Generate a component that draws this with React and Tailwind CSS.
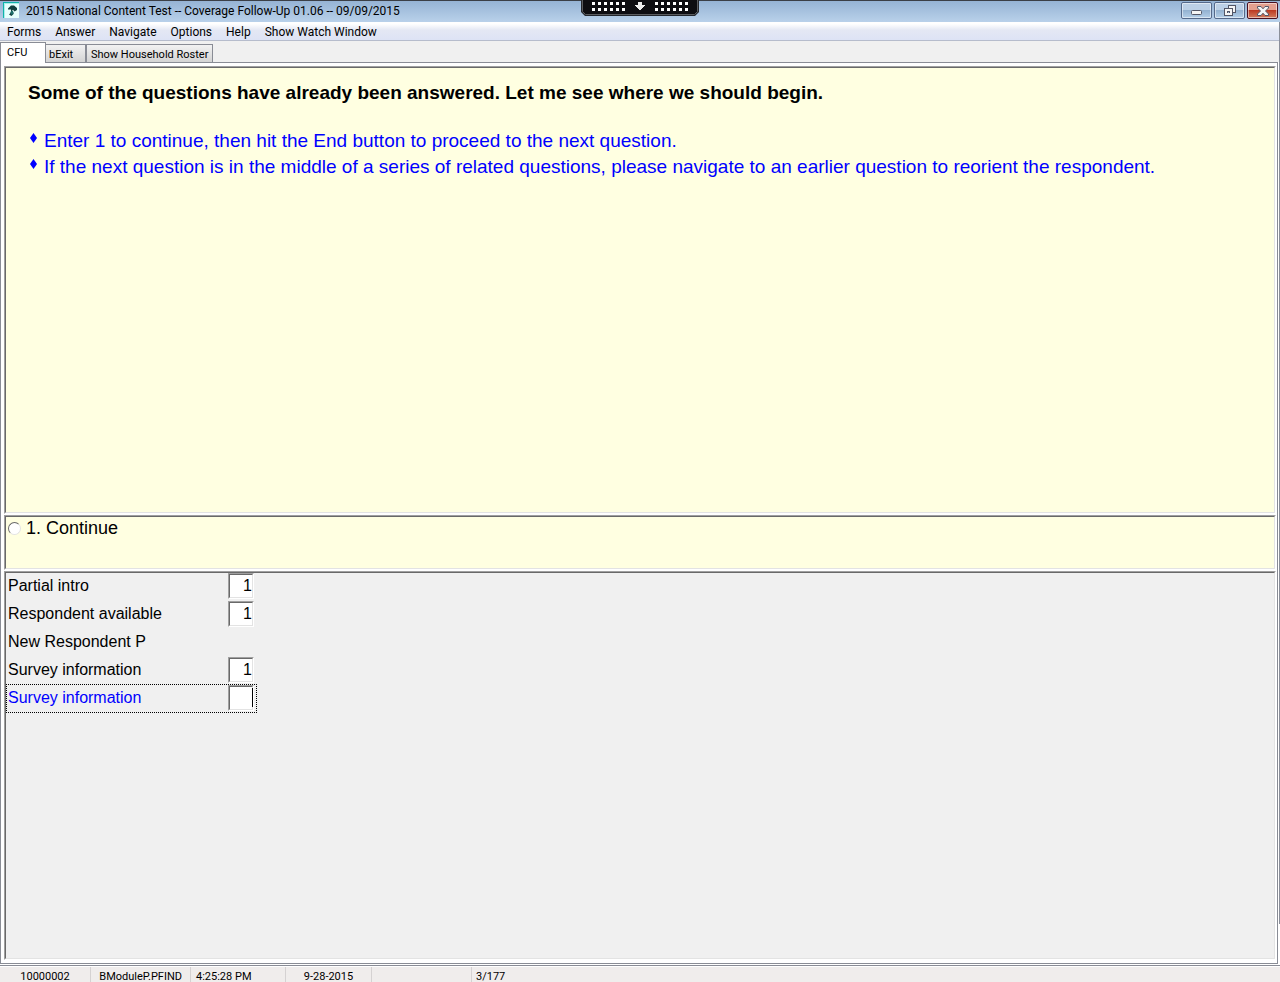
import React from "react";

const menus = ["Forms", "Answer", "Navigate", "Options", "Help", "Show Watch Window"];

const fields = [
  { id: "partial", label: "Partial intro", value: "1" },
  { id: "available", label: "Respondent available", value: "1" },
  { id: "newresp", label: "New Respondent P", value: null },
  { id: "survey1", label: "Survey information", value: "1" },
  { id: "survey2", label: "Survey information", value: "", active: true },
];

const instructions = [
  "Enter 1 to continue, then hit the End button to proceed to the next question.",
  "If the next question is in the middle of a series of related questions, please navigate to an earlier question to reorient the respondent.",
];

const sunken = "border border-t-[#a0a0a0] border-l-[#a0a0a0] border-r-white border-b-white";
const sunkenInner = "border border-t-[#696969] border-l-[#696969] border-r-[#e3e3e3] border-b-[#e3e3e3]";

function Panel({ className, bg, children }) {
  return (
    <section className={`flex flex-col ${sunken} ${className}`}>
      <div className={`grow ${sunkenInner} ${bg}`}>{children}</div>
    </section>
  );
}

function AppIcon() {
  return (
    <svg width="16" height="16" viewBox="0 0 16 16" aria-hidden="true">
      <rect width="16" height="16" fill="#0fb3ab" />
      <rect x="1" y="1" width="15" height="15" fill="#a9efeb" />
      <rect x="2" y="2" width="14" height="14" fill="#e6fffd" />
      <path d="M5 6.500L8 3.500H11L14 6V8L11.500 9.500L10 7.800L9 9L10.500 10.500V12L8.500 14L6 12.500L7 11.500L8 9.500V7.500H5Z" fill="#12403f" />
      <path d="M8 9H10L10.500 11.500L9 13L7.500 11.500Z" fill="#1b6f6b" />
    </svg>
  );
}

function GripDots({ x }) {
  const cols = [0, 6, 12, 18, 24, 30];
  return cols.map((c) => (
    <g key={c} fill="#fff">
      <rect x={x + c} y="2" width="3" height="3" />
      <rect x={x + c} y="8" width="3" height="3" />
    </g>
  ));
}

function SessionBar() {
  return (
    <button type="button" aria-label="Session bar" className="absolute left-1/2 top-0 -translate-x-1/2">
      <svg width="118" height="16" viewBox="0 0 118 16" aria-hidden="true">
        <path d="M0 0H118V12L114 16H4L0 12Z" fill="#24272d" />
        <path d="M1.500 0V11.500L4.500 14.500H113.500L116.500 11.500V0" fill="#0d0d11" stroke="#5b5d60" />
        <g shapeRendering="crispEdges"><GripDots x={11} /><GripDots x={74} /></g>
        <path d="M57 2h4v3h3v1h-1v1h-1v1h-1v1h-1v1h-2v-1h-1v-1h-1v-1h-1v-1h-1v-1h3z" fill="#ececec" shapeRendering="crispEdges" />
      </svg>
    </button>
  );
}

function WindowButton({ label, close, children }) {
  const tone = close
    ? "border-[#4a1020] bg-linear-to-b from-[#e3a08f] from-45% via-[#bc3a22] via-50% to-[#d27a5c]"
    : "border-[#55698a] bg-linear-to-b from-[#bcd0e6] from-45% via-[#94b2d1] via-50% to-[#b4cfe8]";
  return (
    <button type="button" aria-label={label} className={`h-[17px] w-[31px] rounded-[2px] border ${tone}`}>
      <span className="flex h-full items-center justify-center rounded-[1px] border border-white/50">{children}</span>
    </button>
  );
}

export default function App() {
  return (
    <div className="relative flex min-h-screen flex-col bg-white font-['Liberation_Sans',Arial,sans-serif] text-black">
      <header className="relative flex h-[22px] items-start justify-between bg-linear-to-b from-[#94b2d3] to-[#b9d1ea] pl-[3px] pr-[2px] pt-[2px] shadow-[inset_0_1px_0_#3b3f46]">
        <div className="flex items-start gap-[7px]">
          <AppIcon />
          <h1 className="whitespace-nowrap font-[Roboto,'Open_Sans',sans-serif] text-[12px] leading-[18px]">
            2015 National Content Test -- Coverage Follow-Up 01.06 -- 09/09/2015
          </h1>
        </div>
        <SessionBar />
        <div className="flex gap-[2px]">
          <WindowButton label="Minimize">
            <svg width="11" height="5" viewBox="0 0 11 5" className="mt-1" aria-hidden="true">
              <rect x="0.500" y="0.500" width="10" height="4" rx="1" fill="#f5f5f5" stroke="#535666" />
            </svg>
          </WindowButton>
          <WindowButton label="Restore">
            <svg width="12" height="11" viewBox="0 0 12 11" shapeRendering="crispEdges" aria-hidden="true">
              <path d="M4 0h8v8H4z" fill="#535666" />
              <path d="M5 1h6v6H5z" fill="#f5f5f5" />
              <path d="M7 3h2v2H7z" fill="#535666" />
              <path d="M0 3h9v8H0z" fill="#535666" />
              <path d="M1 4h7v6H1z" fill="#f5f5f5" />
              <path d="M3 6h3v2H3z" fill="#535666" />
              <path d="M4 7h1v1H4z" fill="#9db9d6" />
            </svg>
          </WindowButton>
          <WindowButton label="Close" close>
            <svg width="12" height="10" viewBox="0 0 12 10" aria-hidden="true">
              <path d="M0.500 0.500H4L6 2.800L8 0.500H11.500V2L8.500 5L11.500 8V9.500H8L6 7.200L4 9.500H0.500V8L3.500 5L0.500 2Z" fill="#f5f5f5" stroke="#535666" />
            </svg>
          </WindowButton>
        </div>
      </header>

      <nav className="flex h-[19px] gap-[14px] border-b border-[#b6bccc] bg-linear-to-b from-white from-10% via-[#e4e8f4] via-45% to-[#dde3f5] pl-[7px] font-[Roboto,'Open_Sans',sans-serif] text-[12px] leading-5">
        {menus.map((m) => (
          <button type="button" key={m} className="whitespace-nowrap">{m}</button>
        ))}
      </nav>

      <div role="tablist" className="flex h-[21px] items-end bg-[#f0f0f0] font-[Roboto,'Noto_Sans',sans-serif] text-[11px] leading-[14px]">
        <button type="button" role="tab" aria-selected="true" className="relative z-10 -mb-px h-[21px] w-[46px] border border-b-0 border-[#898c95] bg-white pb-px pl-[6px] text-left">CFU</button>
        <button type="button" role="tab" aria-selected="false" className="h-[18px] w-[40px] border border-b-0 border-l-0 border-[#898c95] bg-linear-to-b from-[#f2f2f2] to-[#d4d4d4] pl-[3px] pt-[2px] text-left">bExit</button>
        <button type="button" role="tab" aria-selected="false" className="h-[18px] whitespace-nowrap border border-b-0 border-[#898c95] bg-linear-to-b from-[#f2f2f2] to-[#d4d4d4] px-1 pt-[2px]">Show Household Roster</button>
      </div>

      <main className="mr-[2px] flex grow flex-col gap-px border border-[#898c95] p-[3px] pr-px">
        <Panel className="h-[448px]" bg="bg-[#ffffe1]">
          <div className="px-[22px] pt-[12px] text-[19px] leading-[26px]">
            <h2 className="font-bold">Some of the questions have already been answered. Let me see where we should begin.</h2>
            <ul className="mt-[22px] text-[#0000ff]">
              {instructions.map((t) => (
                <li key={t} className="flex gap-[6px]">
                  <svg width="8" height="10" viewBox="0 0 8 10" className="ml-[2px] mt-[5px] shrink-0" aria-hidden="true">
                    <path d="M3.500 0L7 5L3.500 10L0 5Z" fill="#0000ff" />
                  </svg>
                  <span>{t}</span>
                </li>
              ))}
            </ul>
          </div>
        </Panel>

        <Panel className="h-[55px]" bg="bg-[#ffffe1]">
          <label className="flex items-center gap-[5px] pl-[2px] text-[18px] leading-[22px]">
            <input type="radio" name="answer" className="size-[13px] appearance-none rounded-full border border-[#e3e3e3] border-l-[#696969] border-t-[#696969] bg-white" />
            1. Continue
          </label>
        </Panel>

        <Panel className="grow" bg="bg-[#f0f0f0]">
          <form className="flex flex-col gap-px pl-px text-[16px] leading-[26px]">
            {fields.map((f) => (
              <div key={f.id} className={`flex h-[27px] w-[249px] ${f.active ? "text-[#0000ff] outline-1 outline-dotted outline-black" : ""}`}>
                <label htmlFor={f.value === null ? undefined : f.id} className="w-[221px] pl-px">{f.label}</label>
                {f.value !== null && (
                  <span className={`relative size-[26px] ${sunken}`}>
                    <input id={f.id} defaultValue={f.value} className={`block size-6 bg-white text-right text-black outline-none ${sunkenInner}`} />
                    {f.active && <span className="absolute right-0 top-[2px] h-[19px] w-px bg-black" />}
                  </span>
                )}
              </div>
            ))}
          </form>
        </Panel>
      </main>

      <footer className="mt-px border-t border-[#898c95] pt-px font-[Roboto,'Noto_Sans',sans-serif] text-[11px] leading-5">
        <div className="flex h-[15px] divide-x divide-[#d5d2d2] bg-[#f0edec] pr-[2px]">
          <span className="w-[91px] text-center">10000002</span>
          <span className="w-[100px] pr-2 text-right">BModuleP.PFIND</span>
          <span className="w-[95px] pl-[5px]">4:25:28 PM</span>
          <span className="w-[86px] text-center">9-28-2015</span>
          <span className="w-[100px]" />
          <span className="grow pl-1">3/177</span>
        </div>
      </footer>

      <span className="absolute bottom-[58px] right-0 top-[22px] w-px bg-[#8b8f9a]" aria-hidden="true" />
    </div>
  );
}
